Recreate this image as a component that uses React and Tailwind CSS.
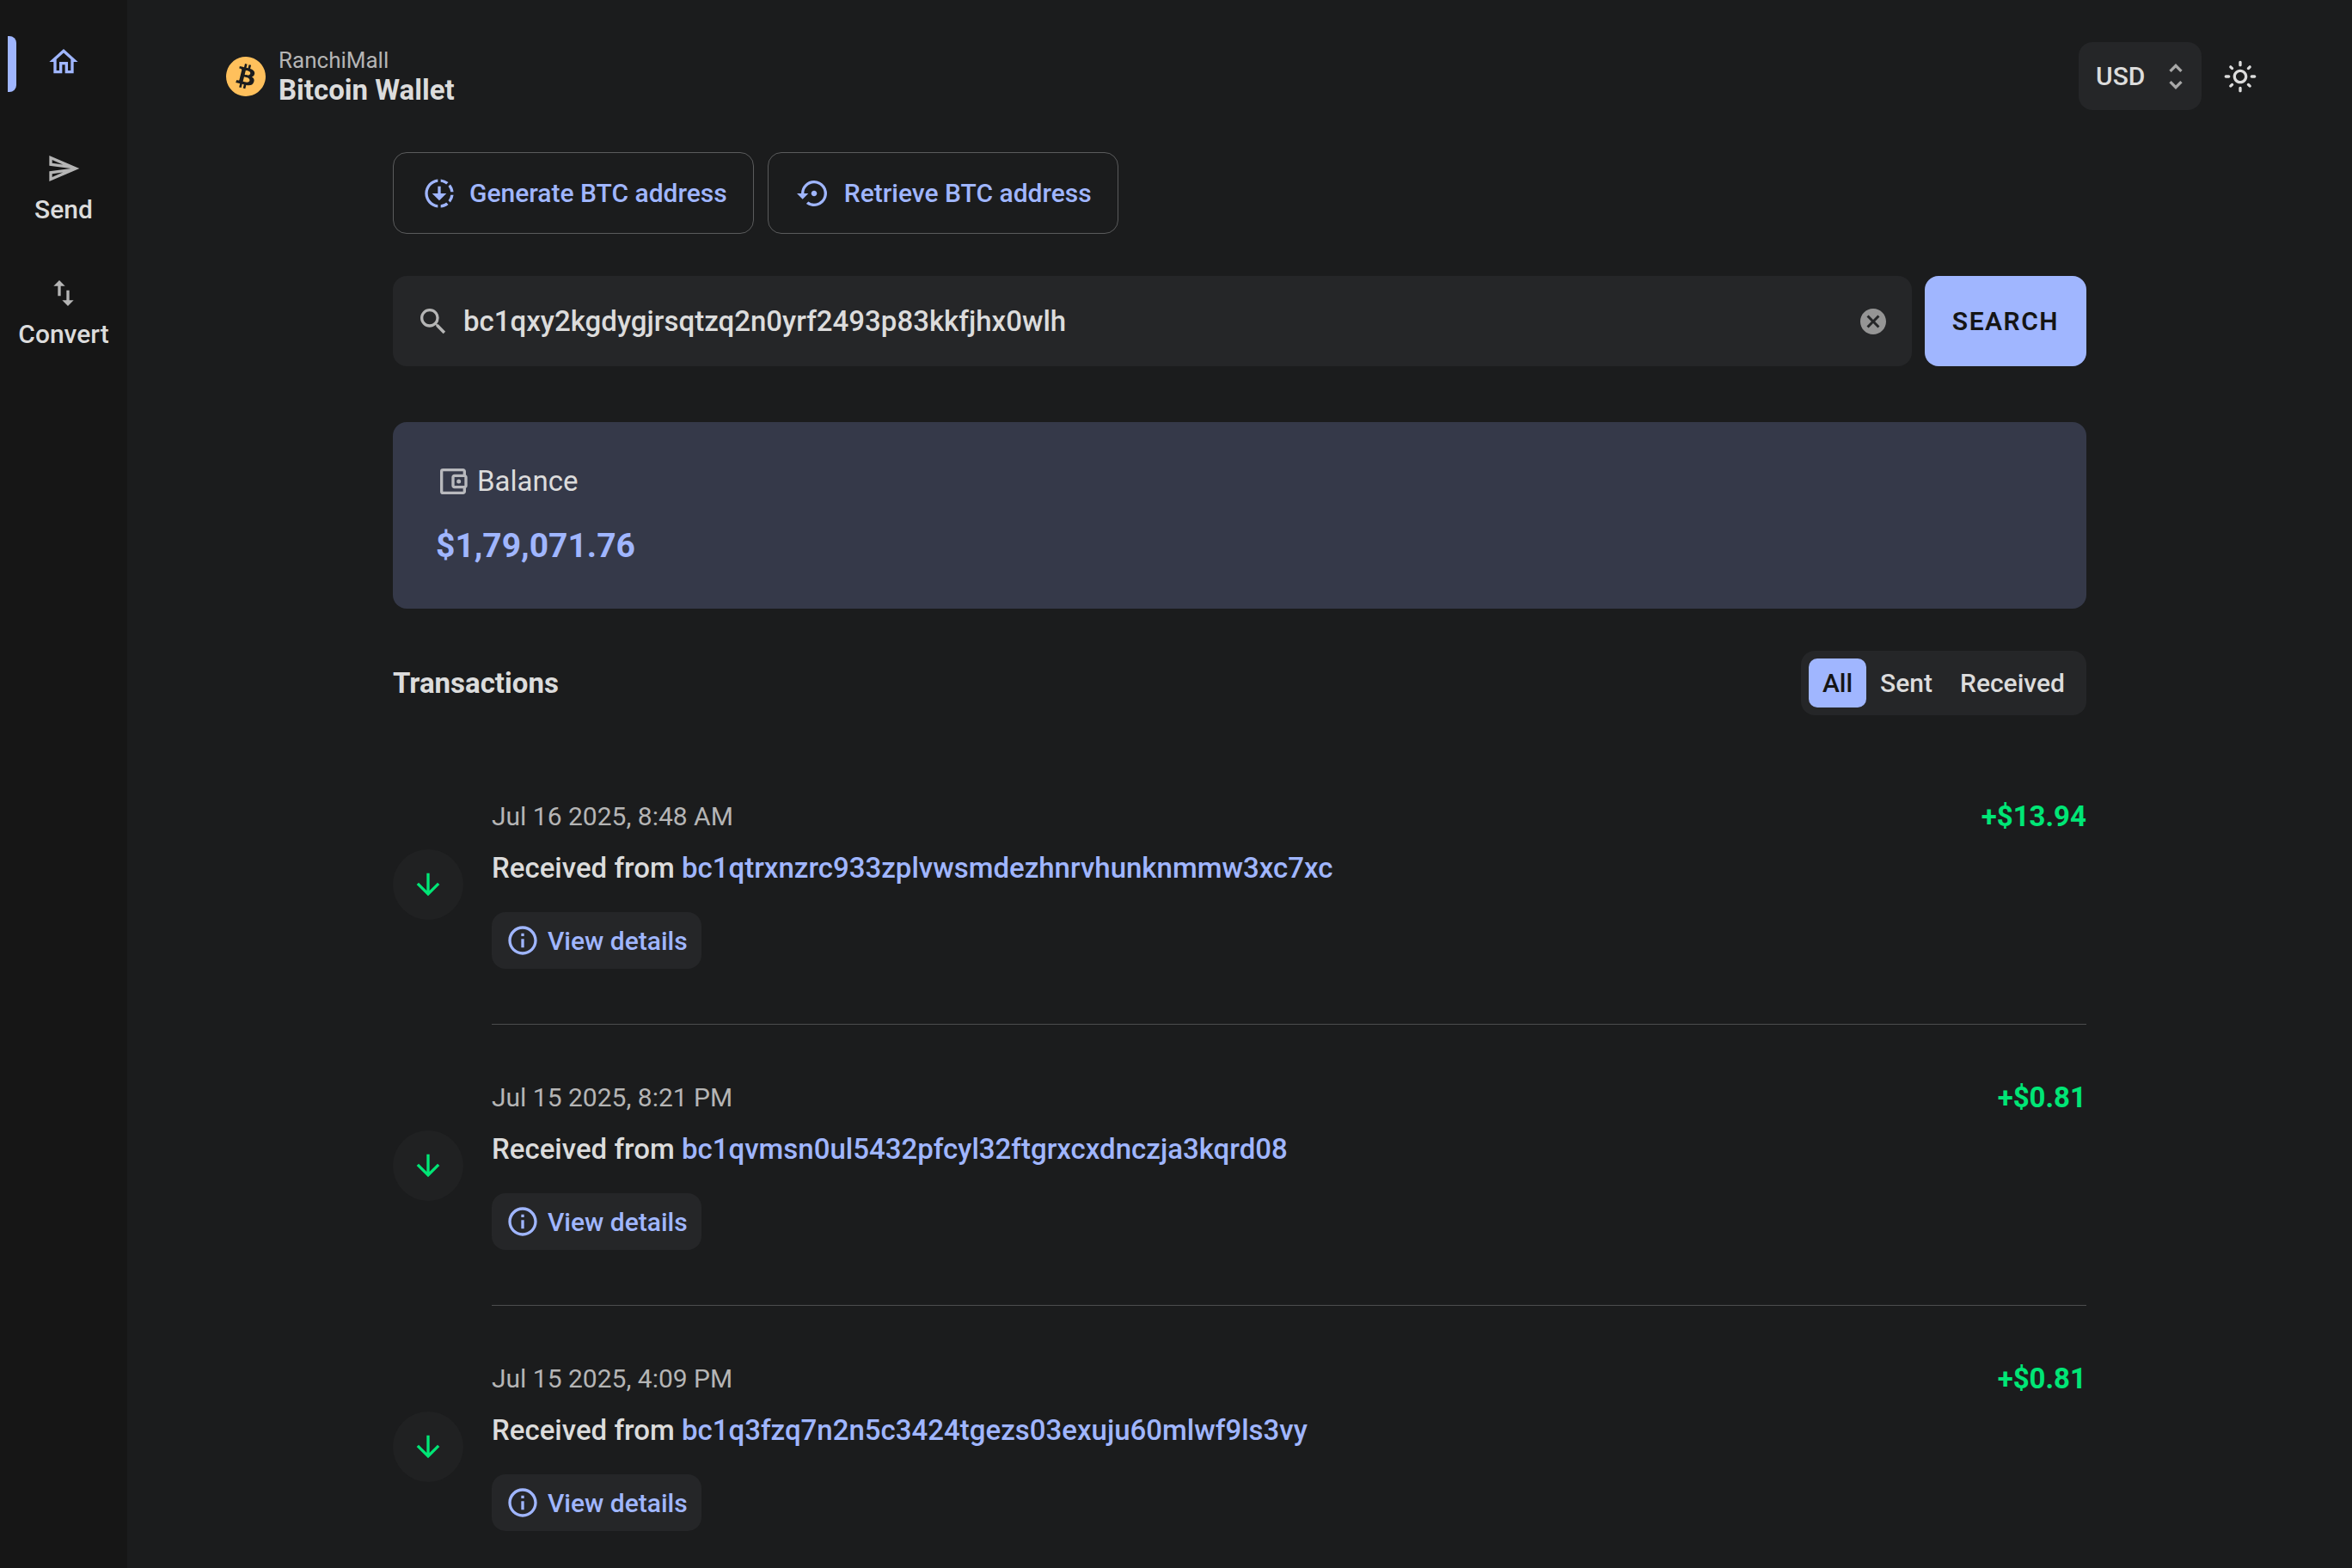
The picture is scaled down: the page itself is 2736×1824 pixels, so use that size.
import { useState } from "react";
import {
  MdOutlineHome,
  MdOutlineSend,
  MdSwapVert,
  MdDownloading,
  MdSettingsBackupRestore,
  MdSearch,
  MdCancel,
  MdUnfoldMore,
  MdOutlineLightMode,
  MdOutlineAccountBalanceWallet,
  MdOutlineInfo,
  MdArrowDownward,
} from "react-icons/md";
import { SiBitcoin } from "react-icons/si";

const transactions = [
  { date: "Jul 16 2025, 8:48 AM", address: "bc1qtrxnzrc933zplvwsmdezhnrvhunknmmw3xc7xc", amount: "+$13.94" },
  { date: "Jul 15 2025, 8:21 PM", address: "bc1qvmsn0ul5432pfcyl32ftgrxcxdnczja3kqrd08", amount: "+$0.81" },
  { date: "Jul 15 2025, 4:09 PM", address: "bc1q3fzq7n2n5c3424tgezs03exuju60mlwf9ls3vy", amount: "+$0.81" },
];

const filters = ["All", "Sent", "Received"];

function Sidebar() {
  return (
    <nav aria-label="Main" className="flex w-[148px] shrink-0 flex-col bg-[#161616]">
      <a href="#home" aria-label="Home" aria-current="page" className="relative mb-[2px] flex h-[144px] items-center justify-center text-[#a0b6ff]">
        <span className="absolute top-[42px] left-[9px] h-[65px] w-[10px] rounded-r-[8px] bg-[#a0b6ff]" />
        <MdOutlineHome className="size-[40px]" />
      </a>
      <a href="#send" className="flex h-[145px] flex-col items-center justify-center gap-[10px]">
        <MdOutlineSend className="size-[40px] text-[#b5b5b5]" />
        <span className="leading-[36px]">Send</span>
      </a>
      <a href="#convert" className="flex h-[145px] flex-col items-center justify-center gap-[10px]">
        <MdSwapVert className="size-[40px] text-[#b5b5b5]" />
        <span className="leading-[36px]">Convert</span>
      </a>
    </nav>
  );
}

function Header() {
  return (
    <header className="flex items-center justify-between pt-[49px] pr-[110px] pl-[115px]">
      <div className="flex items-center gap-[15px]">
        <SiBitcoin className="size-[46px] text-[#ffc05c]" />
        <div>
          <p className="text-[26px] leading-[32px] font-normal text-[#b5b5b5]">RanchiMall</p>
          <h1 className="text-[33px] leading-[38px] font-bold">Bitcoin Wallet</h1>
        </div>
      </div>
      <div className="flex items-center gap-[25px]">
        <div className="relative flex items-center">
          <select
            aria-label="Currency"
            defaultValue="USD"
            className="h-[79px] w-[143px] appearance-none rounded-[16px] bg-[#252628] pl-[20px] font-medium outline-none"
          >
            <option>USD</option>
            <option>INR</option>
            <option>BTC</option>
          </select>
          <MdUnfoldMore className="pointer-events-none absolute right-[10px] size-[40px] text-[#a8a8a8]" />
        </div>
        <button type="button" aria-label="Toggle theme" className="flex">
          <MdOutlineLightMode className="size-[40px]" />
        </button>
      </div>
    </header>
  );
}

function OutlineButton({ icon: Icon, children }) {
  return (
    <button
      type="button"
      className="flex h-[95px] items-center gap-[15px] rounded-[16px] border border-[#5a5b5c] pr-[30px] pl-[33px] font-medium text-[#a0b6ff]"
    >
      <Icon className="size-[40px]" />
      {children}
    </button>
  );
}

function SearchForm() {
  const [address, setAddress] = useState("bc1qxy2kgdygjrsqtzq2n0yrf2493p83kkfjhx0wlh");
  return (
    <form className="mt-[49px] flex gap-[15px]" onSubmit={(e) => e.preventDefault()}>
      <div className="flex h-[105px] flex-1 items-center rounded-[16px] bg-[#252628] px-[27px]">
        <MdSearch className="size-[40px] text-[#b5b5b5]" />
        <input
          type="text"
          aria-label="BTC address"
          value={address}
          onChange={(e) => setAddress(e.target.value)}
          className="ml-[15px] flex-1 bg-transparent text-[33px] font-medium outline-none"
        />
        <button type="button" aria-label="Clear" onClick={() => setAddress("")}>
          <MdCancel className="size-[36px] text-[#959595]" />
        </button>
      </div>
      <button
        type="submit"
        className="rounded-[16px] bg-[#a0b6ff] px-[32px] font-semibold tracking-wider text-[#151515] uppercase"
      >
        Search
      </button>
    </form>
  );
}

function Balance() {
  return (
    <section className="mt-[65px] rounded-[16px] bg-[#353949] px-[50px] py-[49px]">
      <div className="flex items-center gap-[8px]">
        <MdOutlineAccountBalanceWallet className="size-[40px] text-[#b8b9bd]" />
        <h2 className="text-[33px] leading-[40px] font-normal">Balance</h2>
      </div>
      <p className="mt-[31px] text-[39px] leading-[48px] font-bold text-[#a0b6ff]">$1,79,071.76</p>
    </section>
  );
}

function Filters() {
  const [active, setActive] = useState("All");
  return (
    <div role="group" aria-label="Filter transactions" className="flex rounded-[16px] bg-[#252628] p-[9px]">
      {filters.map((name) => (
        <button
          key={name}
          type="button"
          aria-pressed={active === name}
          onClick={() => setActive(name)}
          className={
            active === name
              ? "h-[57px] rounded-[10px] bg-[#a0b6ff] px-[16px] font-medium text-[#151515]"
              : "h-[57px] rounded-[10px] px-[16px] font-medium"
          }
        >
          {name}
        </button>
      ))}
    </div>
  );
}

function Transaction({ date, address, amount }) {
  return (
    <div className="flex items-center gap-[33px]">
      <span className="flex size-[82px] shrink-0 items-center justify-center rounded-full bg-[#202122] text-[#00e676]">
        <MdArrowDownward className="size-[40px]" />
      </span>
      <div className="flex-1">
        <div className="flex items-center justify-between">
          <time className="leading-[36px] font-normal text-[#b5b5b5]">{date}</time>
          <span className="text-[33px] leading-[38px] font-bold text-[#00e676]">{amount}</span>
        </div>
        <p className="mt-[22px] text-[33px] leading-[38px]">
          Received from{" "}
          <a href={`#${address}`} className="text-[#a0b6ff]">
            {address}
          </a>
        </p>
        <button
          type="button"
          className="mt-[32px] flex h-[66px] items-center gap-[9px] rounded-[16px] bg-[#252628] px-[16px] font-medium text-[#a0b6ff]"
        >
          <MdOutlineInfo className="size-[40px]" />
          View details
        </button>
      </div>
    </div>
  );
}

export default function App() {
  return (
    <div className="flex min-h-screen bg-[#1b1c1d] font-['Roboto',sans-serif] text-[30px] font-medium text-[#dcdcdc]">
      <Sidebar />
      <div className="min-w-0 flex-1">
        <Header />
        <main className="mx-auto w-full max-w-[1970px] pt-[49px]">
          <div className="flex gap-[16px]">
            <OutlineButton icon={MdDownloading}>Generate BTC address</OutlineButton>
            <OutlineButton icon={MdSettingsBackupRestore}>Retrieve BTC address</OutlineButton>
          </div>
          <SearchForm />
          <Balance />
          <div className="mt-[49px] flex items-center justify-between">
            <h2 className="text-[33px] leading-[40px] font-bold">Transactions</h2>
            <Filters />
          </div>
          <ul className="mt-[99px]">
            {transactions.map((t, i) => (
              <li key={t.date}>
                {i > 0 && <hr className="mt-[64px] mb-[66px] ml-[115px] border-[#4c4d4e]" />}
                <Transaction {...t} />
              </li>
            ))}
          </ul>
        </main>
      </div>
    </div>
  );
}
